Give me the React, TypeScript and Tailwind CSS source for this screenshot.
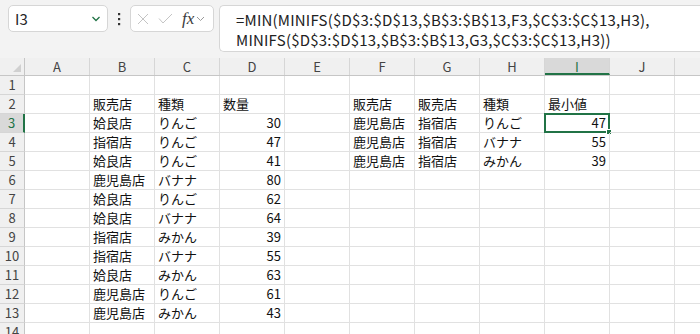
const cols = ['A', 'B', 'C', 'D', 'E', 'F', 'G', 'H', 'I', 'J', 'K'];

type Row = Record<string, string>;

const rows: Row[] = [
  {},
  { B: '販売店', C: '種類', D: '数量', F: '販売店', G: '販売店', H: '種類', I: '最小値' },
  { B: '姶良店', C: 'りんご', D: '30', F: '鹿児島店', G: '指宿店', H: 'りんご', I: '47' },
  { B: '指宿店', C: 'りんご', D: '47', F: '鹿児島店', G: '指宿店', H: 'バナナ', I: '55' },
  { B: '姶良店', C: 'りんご', D: '41', F: '鹿児島店', G: '指宿店', H: 'みかん', I: '39' },
  { B: '鹿児島店', C: 'バナナ', D: '80' },
  { B: '姶良店', C: 'りんご', D: '62' },
  { B: '姶良店', C: 'バナナ', D: '64' },
  { B: '指宿店', C: 'みかん', D: '39' },
  { B: '指宿店', C: 'バナナ', D: '55' },
  { B: '姶良店', C: 'みかん', D: '63' },
  { B: '鹿児島店', C: 'りんご', D: '61' },
  { B: '鹿児島店', C: 'みかん', D: '43' },
  {},
];

const isNum = (v: string) => /^\d+$/.test(v);

function Toolbar() {
  return (
    <div className="flex items-start h-[58px] pl-2 pt-[5px] bg-[#f3f3f3]">
      <div className="w-[100px] h-[27px] shrink-0 flex items-center justify-between pl-[6px] pr-[6px] bg-white border border-[#d6d6d6] rounded-[5px]">
        <span className="text-[15px] text-[#262626] leading-none">I3</span>
        <svg width="10" height="8" viewBox="0 0 10 8">
          <polyline points="1.5,2 5,5.5 8.5,2" fill="none" stroke="#217346" strokeWidth="1.3" />
        </svg>
      </div>
      <div className="w-[22px] h-[27px] shrink-0 flex items-center justify-center">
        <svg width="4" height="14" viewBox="0 0 4 14">
          <rect x="1" y="1" width="2.2" height="2.2" fill="#333" />
          <rect x="1" y="6" width="2.2" height="2.2" fill="#333" />
          <rect x="1" y="11" width="2.2" height="2.2" fill="#333" />
        </svg>
      </div>
      <div className="w-[84px] h-[27px] shrink-0 flex items-center pl-[6px] gap-[9px] bg-white border border-[#d6d6d6] rounded-[5px]">
        <svg width="12" height="12" viewBox="0 0 12 12">
          <path d="M1 1 L11 11 M11 1 L1 11" stroke="#c4c4c4" strokeWidth="1" fill="none" />
        </svg>
        <svg width="15" height="12" viewBox="0 0 15 12">
          <polyline points="1,5.5 5,10 14,1" stroke="#c4c4c4" strokeWidth="1" fill="none" />
        </svg>
        <div className="flex items-center gap-[2px]">
          <span className="font-['Liberation_Serif',serif] italic text-[17px] text-[#3b3b3b] leading-none">fx</span>
          <svg width="9" height="6" viewBox="0 0 9 6">
            <polyline points="1,1 4.5,4.5 8,1" fill="none" stroke="#9a9a9a" strokeWidth="1" />
          </svg>
        </div>
      </div>
      <div className="ml-[5px] flex-1 h-[47px] bg-white border border-r-0 border-[#d6d6d6] rounded-l-[5px] pl-[16px] pt-[4px] text-[15px] leading-[20px] tracking-[0.2px] text-[#222] whitespace-nowrap overflow-hidden">
        <div>=MIN(MINIFS($D$3:$D$13,$B$3:$B$13,F3,$C$3:$C$13,H3),</div>
        <div>MINIFS($D$3:$D$13,$B$3:$B$13,G3,$C$3:$C$13,H3))</div>
      </div>
    </div>
  );
}

function HeaderRow() {
  return (
    <div className="flex h-[18px] bg-[#f0f0f0] border-b border-[#c6c6c6]">
      <div className="w-[25px] shrink-0 flex items-end justify-end pr-[3px] pb-[3px] border-r border-[#c6c6c6]">
        <svg width="8" height="8" viewBox="0 0 8 8">
          <polygon points="8,0 8,8 0,8" fill="#d0d0d0" />
        </svg>
      </div>
      {cols.map((c) => {
        const sel = c === 'I';
        return (
          <div
            key={c}
            className={
              sel
                ? 'w-[65px] shrink-0 flex items-center justify-center bg-[#d9d9d9] border-b-2 border-[#217346] border-r border-r-[#d6d6d6] text-[#217346] text-[13px] pt-[2px]'
                : 'w-[65px] shrink-0 flex items-center justify-center border-r border-[#d6d6d6] text-[#444] text-[13px]'
            }
          >
            {c}
          </div>
        );
      })}
    </div>
  );
}

function Sheet() {
  return (
    <div className="font-['Noto_Sans_CJK_JP','Noto_Sans',sans-serif]">
      <HeaderRow />
      {rows.map((r, i) => {
        const n = i + 1;
        const rowSel = n === 3;
        return (
          <div key={n} className="flex h-[19px]">
            <div
              className={
                rowSel
                  ? 'w-[25px] shrink-0 flex items-center justify-center bg-[#d9d9d9] border-r-2 border-[#217346] border-b border-b-[#d6d6d6] text-[13px] text-[#217346]'
                  : 'w-[25px] shrink-0 flex items-center justify-center bg-[#f0f0f0] border-r border-[#c6c6c6] border-b border-b-[#d6d6d6] text-[13px] text-[#444]'
              }
            >
              {n}
            </div>
            {cols.map((c) => {
              const v = r[c] ?? '';
              const sel = rowSel && c === 'I';
              return (
                <div
                  key={c}
                  className={
                    (isNum(v) ? 'justify-end pr-[3px] ' : 'justify-start pl-[3px] ') +
                    'relative w-[65px] shrink-0 flex items-center border-r border-b border-[#e1e1e1] text-[13px] text-[#111] whitespace-nowrap'
                  }
                >
                  {v}
                  {sel && (
                    <>
                      <div className="absolute -left-[1px] -top-[1px] w-[66px] h-[20px] border-2 border-[#217346]" />
                      <div className="absolute -right-[3px] -bottom-[3px] w-[6px] h-[6px] bg-[#217346] border border-white" />
                    </>
                  )}
                </div>
              );
            })}
          </div>
        );
      })}
    </div>
  );
}

export default function App() {
  return (
    <div className="w-[700px] h-[334px] overflow-hidden bg-white font-['Noto_Sans_CJK_JP','Noto_Sans',sans-serif]">
      <Toolbar />
      <Sheet />
    </div>
  );
}
